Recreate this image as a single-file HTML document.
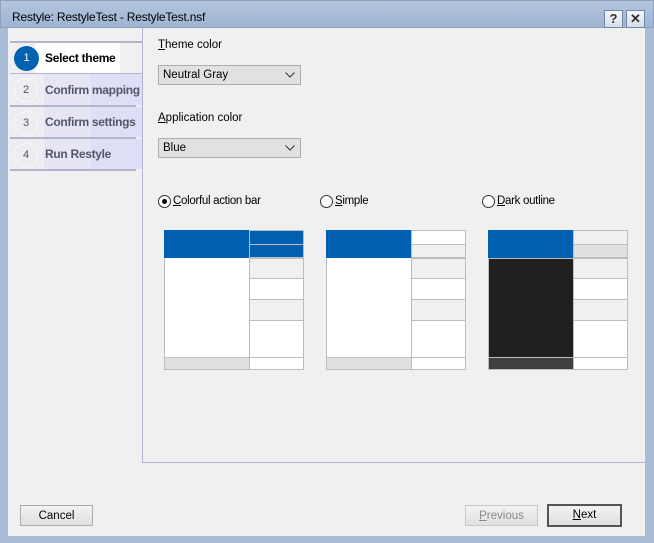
<!DOCTYPE html>
<html><head><meta charset="utf-8"><style>
*{margin:0;padding:0;box-sizing:border-box}
body{width:654px;height:543px;background:#a9bcd6;font-family:"Liberation Sans",Arial,sans-serif;font-size:11px;color:#000;position:relative;overflow:hidden}
.abs{position:absolute;white-space:nowrap}
#title{left:0;top:0;width:654px;height:28px;background:linear-gradient(#b4c6de,#a6bbd7 60%,#9fb4d2);border:1px solid #8da0bc}
#title span{position:absolute;left:11px;top:9px;font-size:12px;color:#000;letter-spacing:-0.2px}
.tb{top:9px;width:19px;height:18px;background:linear-gradient(#f4f6f9,#d8dee8);border:1px solid #6f87a8;font-weight:bold;font-size:13px;text-align:center;line-height:16px;color:#333}
#client{left:8px;top:28px;width:637px;height:508px;background:#f0f0f0}
.sep{height:2px;background:#b4b4cc}
.nav{left:10px;width:132px;height:31px}
.nav .bg1{position:absolute;left:0;top:0;width:34px;height:100%;background:#ededf2}
.nav .bg2{position:absolute;left:34px;top:0;width:47px;height:100%;background:#e5e5f3}
.nav .bg3{position:absolute;left:81px;top:0;width:51px;height:100%;background:#dedef6}
.circ{position:absolute;left:4px;top:4px;width:24px;height:24px;border-radius:50%;border:1px dashed #fff;color:#555;text-align:center;line-height:22px;font-size:11px}
.nav .t{position:absolute;left:35px;top:9px;font-weight:bold;font-size:12px;letter-spacing:-0.3px;color:#55556a;white-space:nowrap}
.sel{width:143px;height:20px;border:1px solid #adadad;background:#e1e1e1;font-size:11.5px;padding:3px 4px}
.sel svg{position:absolute;right:5px;top:6px}
.lbl{font-size:11.5px}
.radio{width:13px;height:13px;border-radius:50%;border:1px solid #333;background:#fff}
.btn{height:21px;border:1px solid #adadad;background:linear-gradient(#f2f2f2,#e0e0e0);text-align:center;font-size:11.5px;line-height:20px}
</style></head><body>
<div id="title" class="abs"><span>Restyle: RestyleTest - RestyleTest.nsf</span>
<div class="abs tb" style="left:603px">?</div><div class="abs tb" style="left:625px">✕</div></div>
<div id="client" class="abs"></div>

<div class="abs" style="left:142px;top:28px;width:1px;height:435px;background:#b4b4d6"></div>
<div class="abs" style="left:142px;top:462px;width:503px;height:1px;background:#b4b4d6"></div>

<div class="abs sep" style="left:10px;top:41px;width:132px"></div>
<div class="abs" style="left:10px;top:43px;width:132px;height:30px;background:#f0f0f0"></div>
<div class="abs" style="left:35px;top:43px;width:85px;height:30px;background:#fff"></div>
<div class="abs" style="left:14px;top:46px;width:25px;height:25px;border-radius:50%;background:#0062b0;color:#fff;text-align:center;line-height:25px;font-size:11px">1</div>
<div class="abs" style="left:45px;top:51px;font-weight:bold;font-size:12px;letter-spacing:-0.3px">Select theme</div>
<div class="abs" style="left:10px;top:73px;width:132px;height:1px;background:#b4b4d6"></div>

<div class="abs nav" style="top:74px"><div class="bg1"></div><div class="bg2"></div><div class="bg3"></div><div class="circ">2</div><div class="t">Confirm mapping</div></div>
<div class="abs sep" style="left:10px;top:105px;width:126px"></div>
<div class="abs nav" style="top:107px;height:30px"><div class="bg1"></div><div class="bg2"></div><div class="bg3"></div><div class="circ">3</div><div class="t" style="top:8px">Confirm settings</div></div>
<div class="abs sep" style="left:10px;top:137px;width:126px"></div>
<div class="abs nav" style="top:139px;height:30px"><div class="bg1"></div><div class="bg2"></div><div class="bg3"></div><div class="circ">4</div><div class="t" style="top:8px">Run Restyle</div></div>
<div class="abs sep" style="left:10px;top:169px;width:126px"></div>

<div class="abs lbl" style="left:158px;top:39px"><u>T</u>heme color</div>
<div class="abs sel" style="left:158px;top:65px">Neutral Gray<svg width="10" height="6"><path d="M0.5 0.5L5 5L9.5 0.5" fill="none" stroke="#333"/></svg></div>
<div class="abs lbl" style="left:158px;top:112px"><u>A</u>pplication color</div>
<div class="abs sel" style="left:158px;top:138px">Blue<svg width="10" height="6"><path d="M0.5 0.5L5 5L9.5 0.5" fill="none" stroke="#333"/></svg></div>

<div class="abs radio" style="left:158px;top:195px"><div style="position:absolute;left:3px;top:3px;width:5px;height:5px;border-radius:50%;background:#000"></div></div>
<div class="abs lbl" style="left:173px;top:195px;letter-spacing:-0.3px"><u>C</u>olorful action bar</div>
<div class="abs radio" style="left:320px;top:195px"></div>
<div class="abs lbl" style="left:335px;top:195px;letter-spacing:-0.3px"><u>S</u>imple</div>
<div class="abs radio" style="left:482px;top:195px"></div>
<div class="abs lbl" style="left:497px;top:195px;letter-spacing:-0.3px"><u>D</u>ark outline</div>

<svg class="abs" style="left:0;top:0" width="654" height="543">
<g stroke="#bdbdbd" stroke-width="1">
<rect x="164.5" y="230.5" width="139" height="139" fill="#fff"/>
<rect x="164" y="230" width="85" height="28" fill="#0060b0" stroke="none"/>
<rect x="249.5" y="230.5" width="54" height="14" fill="#0060b0"/>
<rect x="249.5" y="244.5" width="54" height="13" fill="#0060b0"/>
<rect x="249.5" y="258.5" width="54" height="20" fill="#f0f0f0"/>
<rect x="249.5" y="278.5" width="54" height="21" fill="#fff"/>
<rect x="249.5" y="299.5" width="54" height="21" fill="#f0f0f0"/>
<rect x="249.5" y="320.5" width="54" height="37" fill="#fff"/>
<rect x="164.5" y="357.5" width="85" height="12" fill="#e0e0e0"/>
<rect x="249.5" y="357.5" width="54" height="12" fill="#fff"/>
<rect x="326.5" y="230.5" width="139" height="139" fill="#fff"/>
<rect x="326" y="230" width="85" height="28" fill="#0060b0" stroke="none"/>
<rect x="411.5" y="230.5" width="54" height="14" fill="#fff"/>
<rect x="411.5" y="244.5" width="54" height="13" fill="#f0f0f0"/>
<rect x="411.5" y="258.5" width="54" height="20" fill="#f0f0f0"/>
<rect x="411.5" y="278.5" width="54" height="21" fill="#fff"/>
<rect x="411.5" y="299.5" width="54" height="21" fill="#f0f0f0"/>
<rect x="411.5" y="320.5" width="54" height="37" fill="#fff"/>
<rect x="326.5" y="357.5" width="85" height="12" fill="#e0e0e0"/>
<rect x="411.5" y="357.5" width="54" height="12" fill="#fff"/>
<rect x="488.5" y="230.5" width="139" height="139" fill="#fff"/>
<rect x="488.5" y="258.5" width="85" height="99" fill="#202020"/>
<rect x="488" y="230" width="85" height="28" fill="#0060b0" stroke="none"/>
<rect x="573.5" y="230.5" width="54" height="14" fill="#f0f0f0"/>
<rect x="573.5" y="244.5" width="54" height="13" fill="#e0e0e0"/>
<rect x="573.5" y="258.5" width="54" height="20" fill="#f0f0f0"/>
<rect x="573.5" y="278.5" width="54" height="21" fill="#fff"/>
<rect x="573.5" y="299.5" width="54" height="21" fill="#f0f0f0"/>
<rect x="573.5" y="320.5" width="54" height="37" fill="#fff"/>
<rect x="488.5" y="357.5" width="85" height="12" fill="#404040"/>
<rect x="573.5" y="357.5" width="54" height="12" fill="#fff"/>
</g></svg>

<div class="abs btn" style="left:20px;top:505px;width:73px">Cancel</div>
<div class="abs btn" style="left:465px;top:505px;width:73px;color:#8a8a8a;border-color:#c8c8c8"><u>P</u>revious</div>
<div class="abs btn" style="left:547px;top:504px;width:75px;height:23px;border:2px solid #555;line-height:19px"><u>N</u>ext</div>
</body></html>
